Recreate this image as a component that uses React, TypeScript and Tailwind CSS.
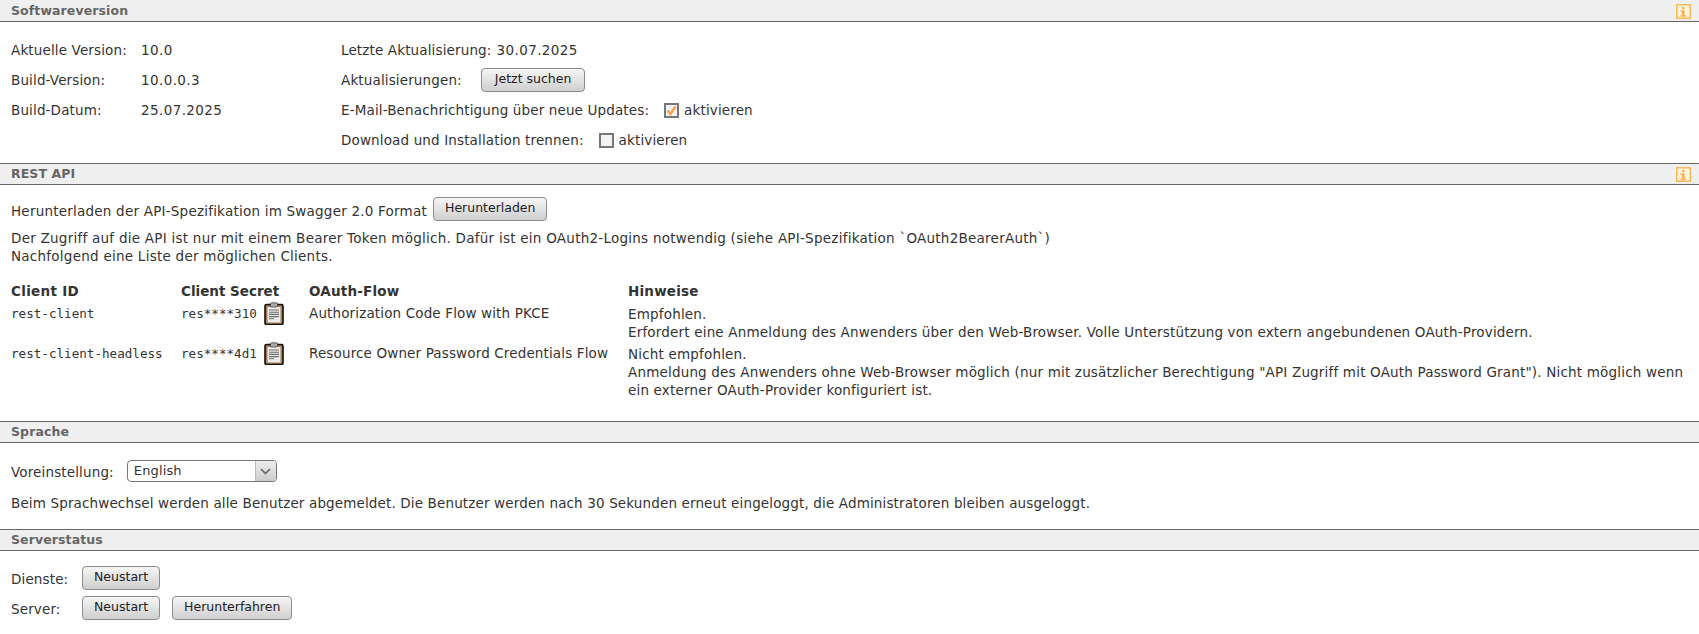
import { Fragment, type ReactNode } from 'react';

const monoFont = { fontFamily: '"DejaVu Sans Mono", monospace' };

const InfoIcon = () => (
  <svg width="15" height="15" viewBox="0 0 15 15" className="block">
    <rect x="0.75" y="0.75" width="13.5" height="13.5" fill="#fff4e0" stroke="#fdb757" strokeWidth="1.5" />
    <rect x="6" y="3" width="2.5" height="2" fill="#fbb04a" />
    <path d="M4.5 6.2h4v5h1.5v1.6H4.5v-1.6H6V7.8H4.5z" fill="#fbb04a" />
  </svg>
);

const ClipboardIcon = () => (
  <svg width="20" height="23" viewBox="0 0 20 23" className="-mt-[4px] block">
    <rect x="1" y="2.5" width="18" height="20" rx="1.5" fill="#a87a50" stroke="#111" strokeWidth="1.6" />
    <rect x="3.5" y="5" width="13" height="15.5" fill="#ececec" />
    <rect x="6.5" y="0.8" width="7" height="4.2" rx="1" fill="#a9a9a9" stroke="#333" strokeWidth="0.7" />
    <path d="M5 8h10M5 10.2h10M5 12.4h10M5 14.6h10M5 16.8h5" stroke="#6c6c6c" strokeWidth="1.1" />
  </svg>
);

const Button = ({ children, className = '' }: { children: ReactNode; className?: string }) => (
  <button
    className={`h-[24px] rounded-[4px] border border-[#8c8c8c] bg-gradient-to-b from-[#f6f6f6] to-[#cfcfcf] pb-[2px] text-[12.5px] leading-none tracking-normal text-[#222] ${className}`}
  >
    {children}
  </button>
);

const Checkbox = ({ checked }: { checked?: boolean }) => (
  <span className="inline-flex h-[15px] w-[15px] items-center justify-center border-2 border-[#777] bg-[#f3f3f3]">
    {checked && (
      <svg width="11" height="11" viewBox="0 0 11 11">
        <path d="M1.5 5.5l3 3.5 5-7.5" fill="none" stroke="#f4a04e" strokeWidth="2.4" />
      </svg>
    )}
  </span>
);

const SectionHeader = ({ title, info, first }: { title: string; info?: boolean; first?: boolean }) => (
  <div
    className={`flex h-[22px] items-center justify-between border-b border-t border-b-[#666] bg-[#efefef] pl-[11px] pr-[8px] ${
      first ? 'border-t-[#efefef]' : 'border-t-[#666]'
    }`}
  >
    <span className="text-[12.5px] font-bold tracking-[0.1px] text-[#666]">{title}</span>
    {info && <InfoIcon />}
  </div>
);

const clients = [
  {
    id: 'rest-client',
    secret: 'res****310',
    flow: 'Authorization Code Flow with PKCE',
    hint: 'Erfordert eine Anmeldung des Anwenders über den Web-Browser. Volle Unterstützung von extern angebundenen OAuth-Providern.',
    lead: 'Empfohlen.',
    rowClass: 'mt-[6px]',
    monoClass: 'mt-[7px]',
  },
  {
    id: 'rest-client-headless',
    secret: 'res****4d1',
    flow: 'Resource Owner Password Credentials Flow',
    hint: 'Anmeldung des Anwenders ohne Web-Browser möglich (nur mit zusätzlicher Berechtigung "API Zugriff mit OAuth Password Grant"). Nicht möglich wenn ein externer OAuth-Provider konfiguriert ist.',
    lead: 'Nicht empfohlen.',
    rowClass: 'mt-[4px]',
    monoClass: 'mt-[5px]',
  },
];

const App = () => {
  return (
    <div
      className="h-[634px] w-[1699px] overflow-hidden bg-white text-[13.5px] leading-[16px] tracking-[0.14px] text-[#333]"
      style={{ fontFamily: '"DejaVu Sans", sans-serif' }}
    >
      <SectionHeader title="Softwareversion" info first />
      <div className="flex h-[141px] pl-[11px] pt-[13px]">
        <div className="grid h-fit w-[330px] grid-cols-[130px_1fr] auto-rows-[30px] items-center">
          <span>Aktuelle Version:</span>
          <span className="tracking-[0.4px]">10.0</span>
          <span>Build-Version:</span>
          <span className="tracking-[0.4px]">10.0.0.3</span>
          <span>Build-Datum:</span>
          <span className="tracking-[0.4px]">25.07.2025</span>
        </div>
        <div className="flex flex-col">
          <div className="flex h-[30px] items-center">
            Letzte Aktualisierung: <span className="ml-[5px] tracking-[0.4px]">30.07.2025</span>
          </div>
          <div className="flex h-[30px] items-center">
            <span>Aktualisierungen:</span>
            <Button className="ml-[19px] px-[13px]">Jetzt suchen</Button>
          </div>
          <div className="flex h-[30px] items-center">
            <span>E-Mail-Benachrichtigung über neue Updates:</span>
            <span className="ml-[15px] mr-[5px] flex"><Checkbox checked /></span>
            <span>aktivieren</span>
          </div>
          <div className="flex h-[30px] items-center">
            <span>Download und Installation trennen:</span>
            <span className="ml-[15px] mr-[5px] flex"><Checkbox /></span>
            <span>aktivieren</span>
          </div>
        </div>
      </div>

      <SectionHeader title="REST API" info />
      <div className="h-[236px] pl-[11px] pr-[10px]">
        <div className="flex h-[36px] items-end">
          <span className="pb-[2px] tracking-[0.22px]">Herunterladen der API-Spezifikation im Swagger 2.0 Format</span>
          <Button className="ml-[6px] px-[11px]">Herunterladen</Button>
        </div>
        <p className="mt-[8px] leading-[18px] tracking-[0.25px]">
          Der Zugriff auf die API ist nur mit einem Bearer Token möglich. Dafür ist ein OAuth2-Logins notwendig (siehe API-Spezifikation `OAuth2BearerAuth`)
          <br />
          Nachfolgend eine Liste der möglichen Clients.
        </p>
        <div className="mt-[18px] grid grid-cols-[170px_128px_319px_1fr]">
          <span className="font-bold tracking-[0.3px]">Client ID</span>
          <span className="font-bold tracking-normal">Client Secret</span>
          <span className="font-bold tracking-[0.2px]">OAuth-Flow</span>
          <span className="font-bold tracking-[0.2px]">Hinweise</span>
          {clients.map((client) => (
            <Fragment key={client.id}>
              <span className={`${client.monoClass} text-[12.6px] tracking-normal`} style={monoFont}>{client.id}</span>
              <span className={`${client.monoClass} flex items-start gap-[7px] text-[12.6px] tracking-normal`} style={monoFont}>
                {client.secret}
                <ClipboardIcon />
              </span>
              <span className={client.rowClass}>{client.flow}</span>
              <span className={`${client.rowClass} leading-[18px] tracking-[0.18px]`}>
                {client.lead}
                <br />
                {client.hint}
              </span>
            </Fragment>
          ))}
        </div>
      </div>

      <SectionHeader title="Sprache" />
      <div className="h-[86px] pl-[11px]">
        <div className="flex h-[40px] items-end pb-[1px]">
          <span className="pb-[2px]">Voreinstellung:</span>
          <span className="ml-[13px] flex h-[22px] w-[150px] items-stretch overflow-hidden rounded-[4px] border border-[#777]">
            <span className="flex-1 pl-[6px] pt-[1px] text-[13px] leading-[18px]">English</span>
            <span className="flex w-[21px] items-center justify-center border-l border-[#bbb] bg-gradient-to-b from-[#eee] to-[#ccc]">
              <svg width="11" height="7" viewBox="0 0 11 7">
                <path d="M1 1l4.5 4.5L10 1" fill="none" stroke="#666" strokeWidth="1.6" />
              </svg>
            </span>
          </span>
        </div>
        <p className="mt-[12px]">
          Beim Sprachwechsel werden alle Benutzer abgemeldet. Die Benutzer werden nach 30 Sekunden erneut eingeloggt, die Administratoren bleiben ausgeloggt.
        </p>
      </div>

      <SectionHeader title="Serverstatus" />
      <div className="pl-[11px] pt-[15px]">
        <div className="flex h-[30px] items-start">
          <span className="w-[71px] pt-[5px]">Dienste:</span>
          <Button className="px-[11px]">Neustart</Button>
        </div>
        <div className="flex h-[30px] items-start">
          <span className="w-[71px] pt-[5px]">Server:</span>
          <Button className="px-[11px]">Neustart</Button>
          <Button className="ml-[12px] px-[11px]">Herunterfahren</Button>
        </div>
      </div>
    </div>
  );
};

export default App;
